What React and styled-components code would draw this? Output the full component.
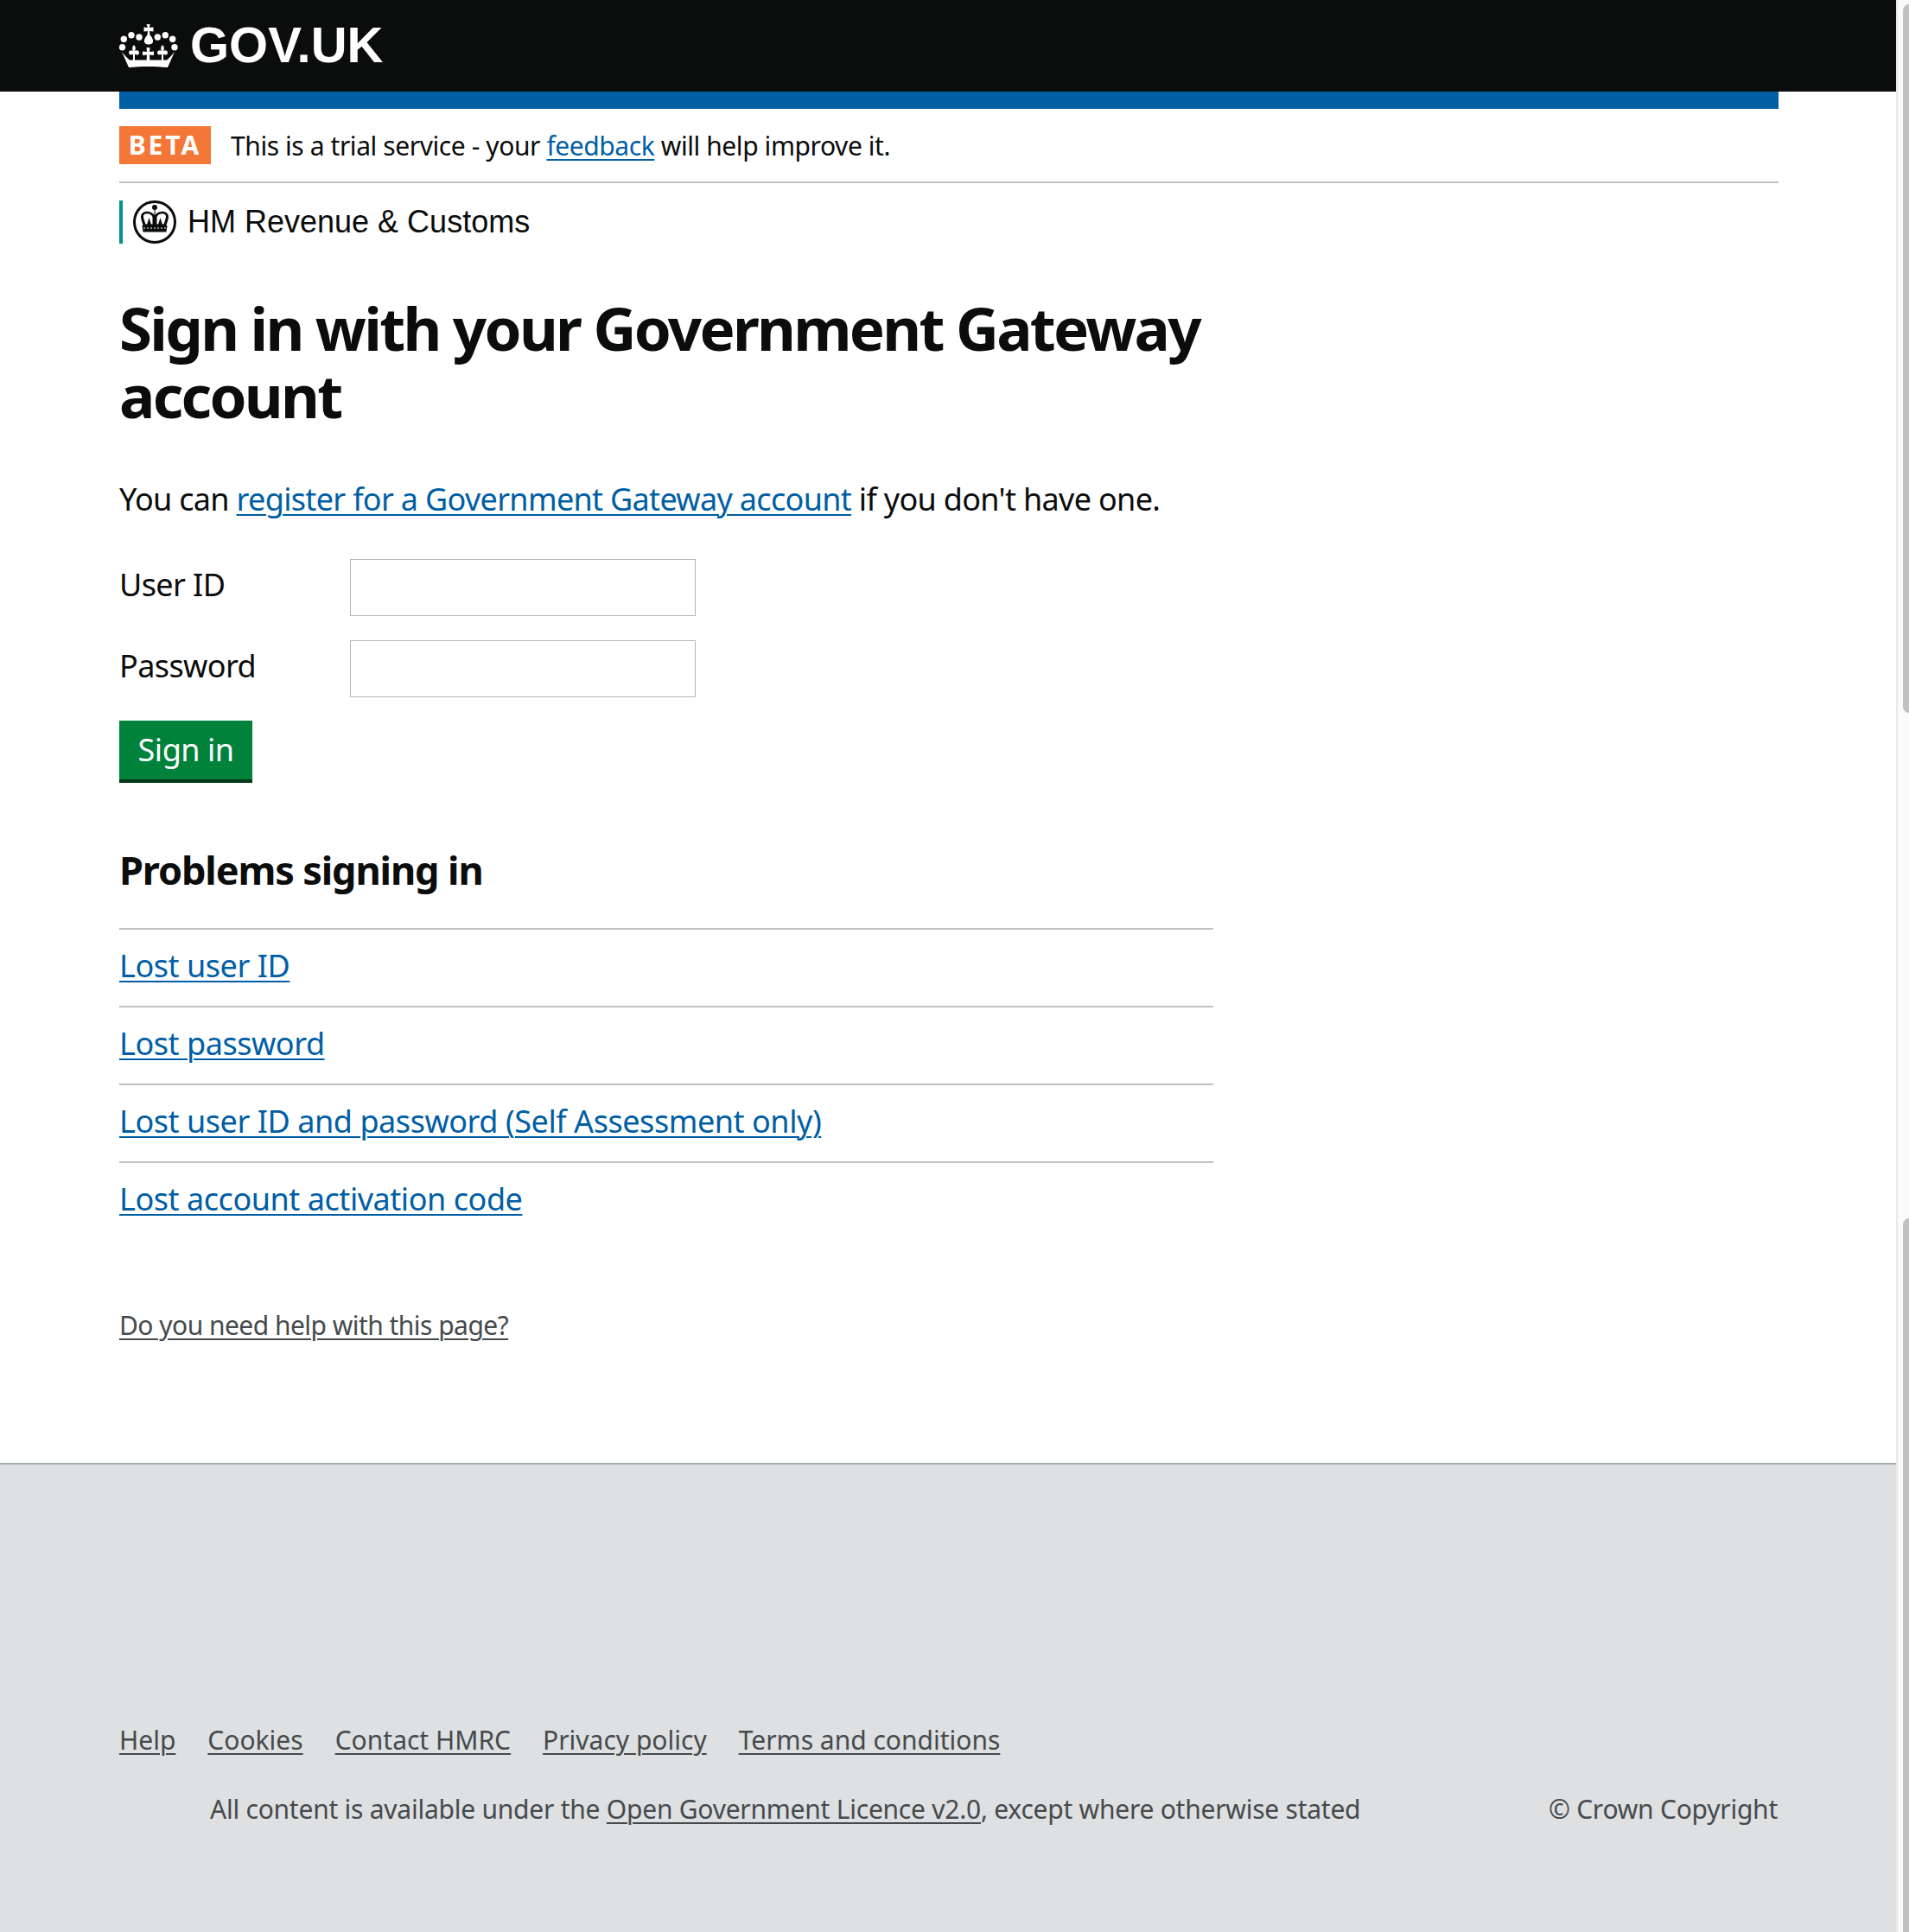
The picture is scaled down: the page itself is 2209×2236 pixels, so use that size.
import React from "react";
import styled, { createGlobalStyle } from "styled-components";

const GlobalStyle = createGlobalStyle`
  html, body {
    margin: 0;
    padding: 0;
    background: #fff;
  }
  body {
    font-family: "Noto Sans", "Open Sans", sans-serif;
    color: #0b0c0c;
  }
`;

const Page = styled.div`
  display: flex;
  width: 2209px;
  height: 2236px;
  overflow: hidden;
`;

const Viewport = styled.div`
  flex: 1;
  display: flex;
  flex-direction: column;
  min-width: 0;
`;

const Scrollbar = styled.div`
  box-sizing: border-box;
  flex: none;
  width: 15px;
  background: #fafafa;
  border-left: 2px solid #e8e8e8;
  padding: 5px 0 0 6px;
  display: flex;
  flex-direction: column;
  justify-content: space-between;
`;

const Thumb = styled.div`
  height: ${(p) => p.$height}px;
  background: #c1c1c1;
  border-radius: ${(p) => p.$radius};
`;

const Header = styled.header`
  background: #0b0c0c;
  height: 106px;
  padding: 0 138px;
  display: flex;
  align-items: center;
  gap: 13px;
`;

const LogoText = styled.span`
  font-family: "Liberation Sans", Arial, sans-serif;
  font-weight: 700;
  font-size: 58px;
  line-height: 64px;
  padding-bottom: 2px;
  color: #fff;
`;

const Wrapper = styled.div`
  padding: 0 136px 0 138px;
`;

const BlueBar = styled.div`
  height: 20px;
  background: #005ea5;
`;

const Phase = styled.div`
  display: flex;
  align-items: center;
  gap: 23px;
  height: 84px;
  border-bottom: 2px solid #bfc1c3;
  font-size: 30px;
  letter-spacing: -0.42px;
`;

const Tag = styled.strong`
  background: #f47738;
  color: #fff;
  width: 106px;
  height: 44px;
  padding-bottom: 2px;
  box-sizing: border-box;
  display: flex;
  align-items: center;
  justify-content: center;
  font-size: 30px;
  font-weight: 700;
  letter-spacing: 3px;
`;

const Link = styled.a`
  color: ${(p) => p.$color || "#005ea5"};
  text-decoration: underline;
  text-underline-offset: 4px;
  text-decoration-thickness: 2px;
`;

const Org = styled.div`
  margin-top: 20px;
  height: 50px;
  border-left: 4px solid #009390;
  padding-left: 12px;
  display: flex;
  align-items: center;
  gap: 13px;
  font-family: "Liberation Sans", Arial, sans-serif;
  font-size: 36px;
`;

const Main = styled.main`
  width: 1266px;
`;

const Title = styled.h1`
  margin: 58px 0 0;
  font-size: 69px;
  line-height: 78px;
  font-weight: 700;
  letter-spacing: -2.7px;
`;

const Lead = styled.p`
  margin: 57px 0 0;
  font-size: 36px;
  line-height: 50px;
  letter-spacing: -0.68px;
`;

const Form = styled.form`
  margin-top: 44px;
  display: flex;
  flex-direction: column;
  align-items: flex-start;
  gap: 28px;
`;

const Field = styled.div`
  display: flex;
  align-items: center;
`;

const Label = styled.label`
  width: 267px;
  font-size: 36px;
  line-height: 50px;
  padding-bottom: 6px;
  letter-spacing: -0.6px;
`;

const Input = styled.input`
  width: 400px;
  height: 66px;
  box-sizing: border-box;
  border: 1px solid #b5b7b9;
  background: #fff;
  margin: 0;
`;

const Button = styled.button`
  width: 154px;
  height: 72px;
  box-sizing: border-box;
  border: 0;
  margin: -1px 0 0;
  padding: 0 0 6px;
  background: #00823b;
  box-shadow: inset 0 -4px 0 #003618;
  color: #fff;
  font-family: inherit;
  font-size: 36px;
  letter-spacing: -0.5px;
`;

const SubTitle = styled.h2`
  margin: 71px 0 0;
  font-size: 45px;
  line-height: 60px;
  font-weight: 700;
  letter-spacing: -1.1px;
`;

const Problems = styled.ul`
  list-style: none;
  margin: 37px 0 0;
  padding: 0;
`;

const Problem = styled.li`
  border-top: 2px solid #bfc1c3;
  height: 90px;
  padding-top: 17px;
  box-sizing: border-box;
  font-size: 36px;
  line-height: 50px;
  letter-spacing: -0.45px;
`;

const HelpLine = styled.p`
  margin: 80px 0 0;
  font-size: 30px;
  line-height: 40px;
  letter-spacing: -0.53px;
`;

const Footer = styled.footer`
  margin-top: 139px;
  flex: 1;
  background: #dee0e2;
  border-top: 2px solid #a1acb2;
  padding: 299px 137px 0 138px;
  color: #454a4c;
  font-size: 30px;
`;

const FooterLinks = styled.nav`
  display: flex;
  gap: 37px;
  line-height: 40px;
`;

const Licence = styled.div`
  margin-top: 40px;
  display: flex;
  justify-content: space-between;
  line-height: 40px;
  padding-left: 105px;
  letter-spacing: -0.24px;
`;

function Crown() {
  const pearls = [[5.3, 17.3], [14, 12.7], [23, 15], [44.3, 15], [53.3, 12.7], [61.7, 17.3], [3.5, 26.7], [64, 26.7]];
  const fleurs = [17, 50];
  return (
    <svg width="69" height="50" viewBox="0 0 69 50" fill="#fff">
      <path d="M31.5 0h4l-.5 4 4.500-.5v5l-4.500-.5.5 4.500c3 3 4 6 3.500 8-.5 2-2 3-5 3s-4.500-1-5-3c-.5-2 .5-5 3.500-8l.5-4.500-4.500.5v-5l4.500.5z" />
      {pearls.map(([x, y]) => (
        <circle key={x + "-" + y} cx={x} cy={y} r="3.700" />
      ))}
      {fleurs.map((x) => (
        <path
          key={x}
          d={`M${x} 24c2 2 2.500 4 1 7c2-1.500 5-1 5 2s-3 3-5 1.500v8h-2v-8c-2 1.500-5 1-5-1.500s3-3.500 5-2c-1.500-3-1-5 1-7z`}
        />
      ))}
      <path d="M31.500 27h4l-.5 5 5-.5v4.500l-5-.5.5 8h-4l.5-8-5 .5v-4.500l5 .5z" />
      <path d="M3 32C6 36 9 39 12 41.500L55 41.500C58 39 61 36 64 32L56 50C42 48.500 25 48.500 11 50Z" />
    </svg>
  );
}

function Seal() {
  return (
    <svg width="50" height="50" viewBox="0 0 50 50" fill="#0b0c0c">
      <circle cx="25" cy="25" r="23.500" fill="#fff" stroke="#0b0c0c" strokeWidth="3" />
      <circle cx="25" cy="8" r="3" />
      <path d="M9 19c0-5 5-7 9-6 3 .5 5.500 2 6.500 4v-6h1v6c1-2 3.500-3.500 6.500-4 4-1 9 1 9 6 0 3-1.500 6-2.500 10H11.500C10.500 25 9 22 9 19z" />
      <path
        fill="#fff"
        d="M12 18.500c0-3 3-3.500 6-3 2.500.5 4 2 4.500 4v8h-8c-.8-3-2.500-6-2.500-9zM38 18.500c0-3-3-3.500-6-3-2.500.5-4 2-4.500 4v8h8c.8-3 2.500-6 2.500-9z"
      />
      <path d="M18.500 20l2.500 8h-5zM31.500 20l2.500 8h-5z" />
      <path d="M10.500 29h29l-1 7.500h-27z" />
      <path stroke="#fff" strokeWidth="1" strokeDasharray="2 2" d="M12 32h26" />
    </svg>
  );
}

function App() {
  const problems = [
    "Lost user ID",
    "Lost password",
    "Lost user ID and password (Self Assessment only)",
    "Lost account activation code",
  ];
  const footerLinks = ["Help", "Cookies", "Contact HMRC", "Privacy policy", "Terms and conditions"];

  return (
    <Page>
      <GlobalStyle />
      <Viewport>
        <Header>
          <Crown />
          <LogoText>GOV.UK</LogoText>
        </Header>
        <Wrapper>
          <BlueBar />
          <Phase>
            <Tag>BETA</Tag>
            <span>
              This is a trial service - your <Link href="#">feedback</Link> will help improve it.
            </span>
          </Phase>
          <Org>
            <Seal />
            HM Revenue &amp; Customs
          </Org>
          <Main>
            <Title>Sign in with your Government Gateway account</Title>
            <Lead>
              You can <Link href="#">register for a Government Gateway account</Link> if you don't
              have one.
            </Lead>
            <Form onSubmit={(e) => e.preventDefault()}>
              <Field>
                <Label htmlFor="user-id">User ID</Label>
                <Input id="user-id" type="text" />
              </Field>
              <Field>
                <Label htmlFor="password">Password</Label>
                <Input id="password" type="password" />
              </Field>
              <Button type="submit">Sign in</Button>
            </Form>
            <SubTitle>Problems signing in</SubTitle>
            <Problems>
              {problems.map((item) => (
                <Problem key={item}>
                  <Link href="#">{item}</Link>
                </Problem>
              ))}
            </Problems>
            <HelpLine>
              <Link href="#" $color="#454a4c">Do you need help with this page?</Link>
            </HelpLine>
          </Main>
        </Wrapper>
        <Footer>
          <FooterLinks>
            {footerLinks.map((item) => (
              <Link key={item} href="#" $color="#454a4c">{item}</Link>
            ))}
          </FooterLinks>
          <Licence>
            <span>
              All content is available under the{" "}
              <Link href="#" $color="#454a4c">Open Government Licence v2.0</Link>, except where
              otherwise stated
            </span>
            <span>© Crown Copyright</span>
          </Licence>
        </Footer>
      </Viewport>
      <Scrollbar>
        <Thumb $height={820} $radius="7px 0 0 7px" />
        <Thumb $height={826} $radius="7px 0 0 0" />
      </Scrollbar>
    </Page>
  );
}

export default App;
